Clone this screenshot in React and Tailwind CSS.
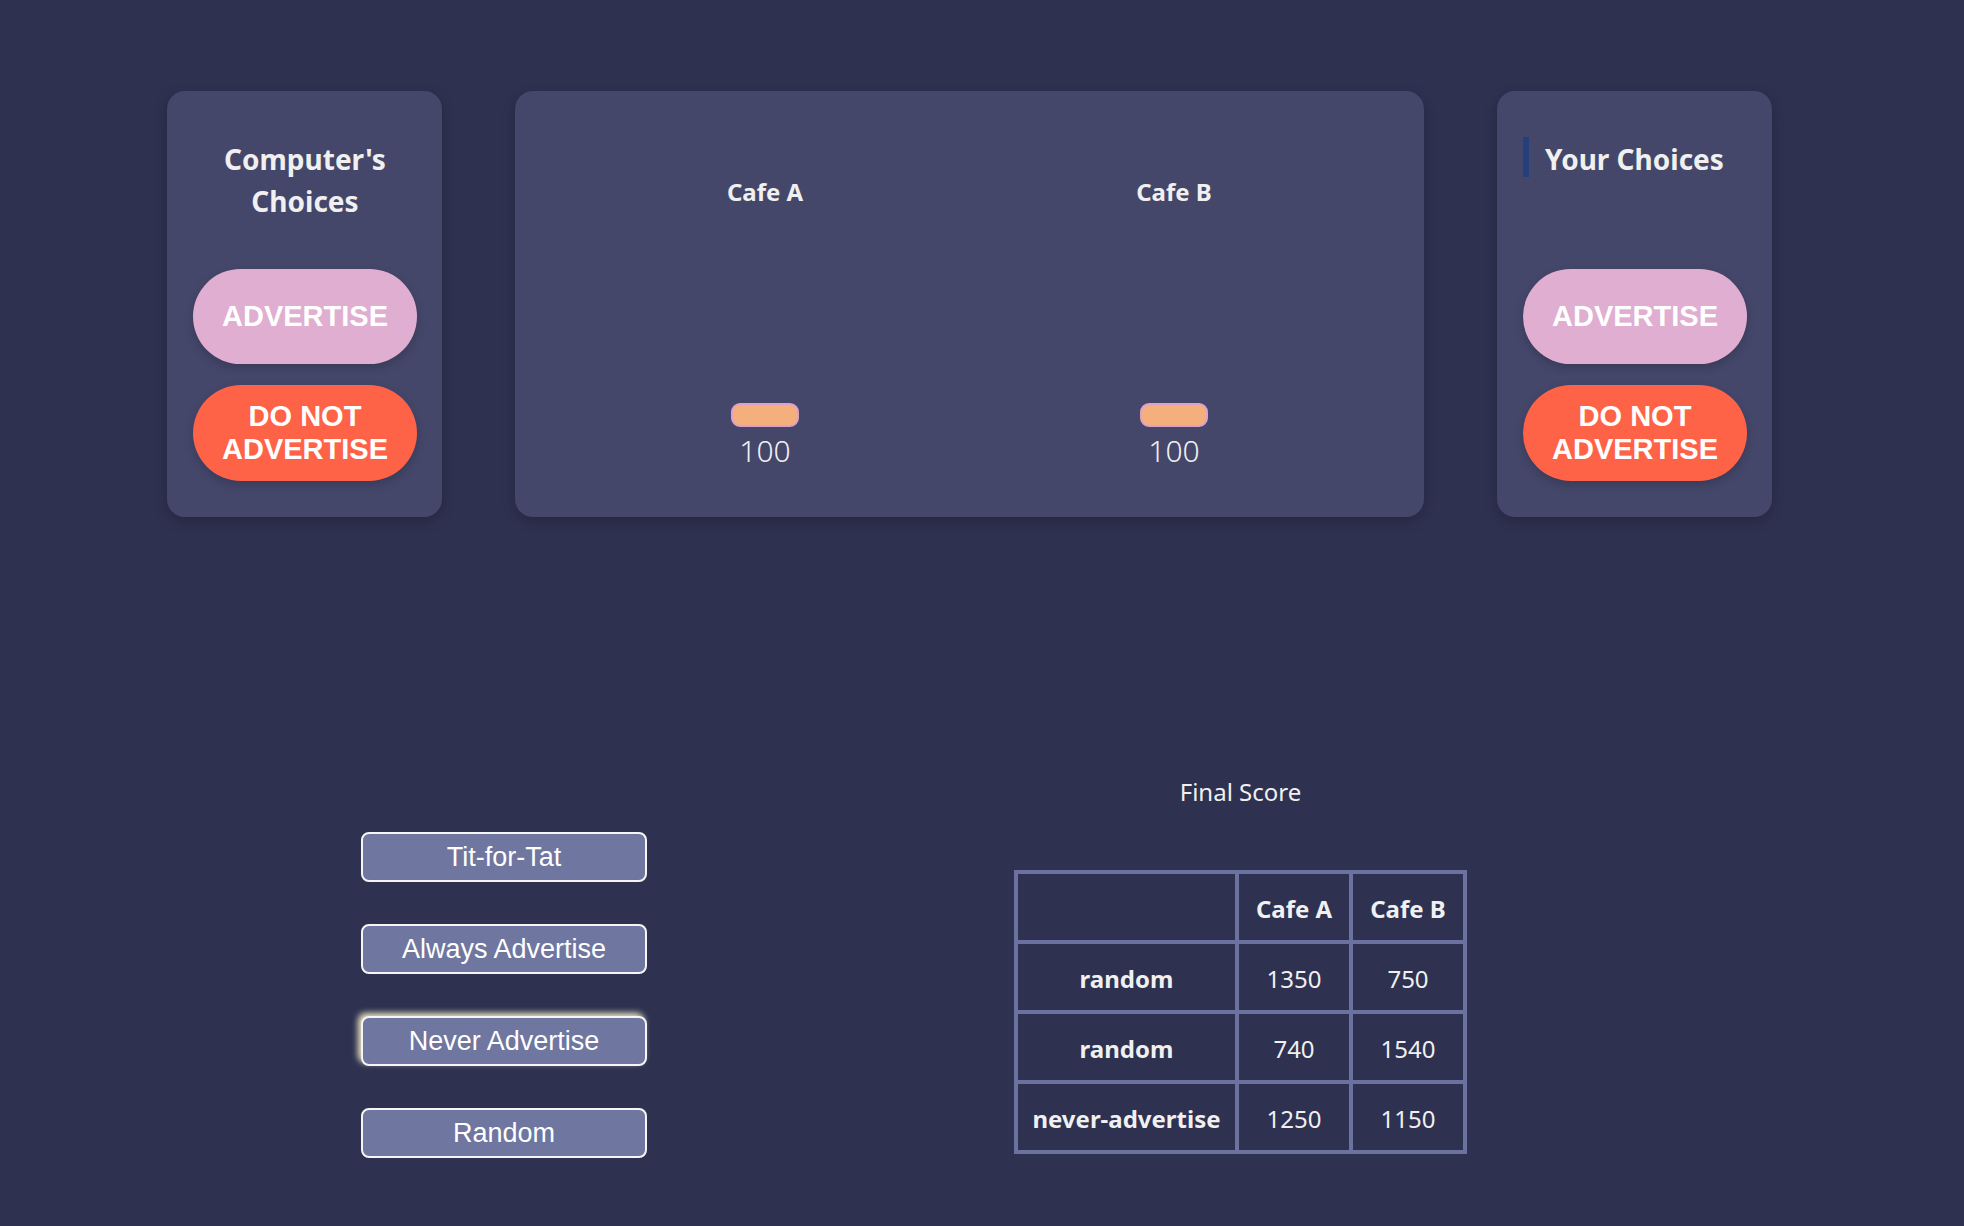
import React from "react";

const sans = "font-['Noto_Sans','Open_Sans',sans-serif]";
const arial = "font-['Liberation_Sans',Arial,sans-serif]";

const ChoiceButtons = () => (
  <div className="flex flex-col gap-[21px]">
    <button
      className={`${arial} h-[95px] w-[224px] rounded-full bg-[#e0aed0] text-[29px] font-bold leading-[33px] text-white shadow-[0_4px_10px_rgba(0,0,0,0.18)]`}
    >
      ADVERTISE
    </button>
    <button
      className={`${arial} h-[96px] w-[224px] rounded-full bg-[#ff6347] text-[29px] font-bold leading-[33px] text-white shadow-[0_4px_10px_rgba(0,0,0,0.18)]`}
    >
      DO NOT
      <br />
      ADVERTISE
    </button>
  </div>
);

const SideCard = ({ children }) => (
  <div className="flex h-[426px] w-[275px] shrink-0 flex-col rounded-[18px] bg-[#44476a] pl-[26px] pt-[46px] shadow-[0_4px_14px_rgba(0,0,0,0.2)]">
    <div className="h-[132px] w-[224px]">{children}</div>
    <ChoiceButtons />
  </div>
);

const CafeColumn = ({ name, score }) => (
  <div className="flex w-[409px] flex-col items-center pt-[86px]">
    <h3 className="text-[24px] font-bold leading-[30px] text-[#f0f0f0]">{name}</h3>
    <div className="mt-[196px] h-[24px] w-[68px] rounded-[9px] border-2 border-[#dda0cc] bg-[#f4b07c]" />
    <div className="mt-[5px] text-[30px] font-light leading-[38px] text-[#f0f0f0]">{score}</div>
  </div>
);

const strategies = ["Tit-for-Tat", "Always Advertise", "Never Advertise", "Random"];

const results = [
  { name: "random", a: 1350, b: 750 },
  { name: "random", a: 740, b: 1540 },
  { name: "never-advertise", a: 1250, b: 1150 },
];

const App = () => {
  return (
    <div className={`${sans} min-h-screen w-full bg-[#2e3150] pl-[167px] pt-[91px] text-[#f0f0f0]`}>
      <div className="flex gap-[73px]">
        <SideCard>
          <h2 className="mt-[1px] text-center text-[28px] font-bold leading-[42px]">
            Computer's
            <br />
            Choices
          </h2>
        </SideCard>

        <div className="flex h-[426px] w-[909px] shrink-0 justify-center rounded-[18px] bg-[#44476a] shadow-[0_4px_14px_rgba(0,0,0,0.2)]">
          <CafeColumn name="Cafe A" score={100} />
          <CafeColumn name="Cafe B" score={100} />
        </div>

        <SideCard>
          <div className="flex items-start">
            <div className="h-[40px] w-[6px] bg-[#243f7c]" />
            <h2 className="ml-[16px] mt-[1px] text-[28px] font-bold leading-[42px]">Your Choices</h2>
          </div>
        </SideCard>
      </div>

      <div className="mt-[260px] flex">
        <div className="ml-[194px] flex flex-col gap-[42px] pt-[55px]">
          {strategies.map((s) => (
            <button
              key={s}
              className={`${arial} h-[50px] w-[286px] rounded-[8px] border-2 border-[#f5f5f5] bg-[#6f76a0] text-[27px] leading-[30px] text-white ${
                s === "Never Advertise" ? "shadow-[-3px_-3px_6px_rgba(255,250,205,0.9)]" : ""
              }`}
            >
              {s}
            </button>
          ))}
        </div>

        <div className="ml-[369px] flex w-[449px] flex-col items-center">
          <div className="text-[24px] leading-[30px]">Final Score</div>
          <table className="mt-[63px] w-[449px] table-fixed border-collapse border-4 border-[#6c729f] text-[24px]">
            <colgroup>
              <col className="w-[221px]" />
              <col className="w-[114px]" />
              <col className="w-[114px]" />
            </colgroup>
            <thead>
              <tr className="h-[70px]">
                <th className="border-4 border-[#6c729f]" />
                <th className="border-4 border-[#6c729f] pt-[3px] font-bold">Cafe A</th>
                <th className="border-4 border-[#6c729f] pt-[3px] font-bold">Cafe B</th>
              </tr>
            </thead>
            <tbody>
              {results.map((r, i) => (
                <tr key={i} className="h-[70px]">
                  <td className="border-4 border-[#6c729f] pt-[3px] text-center font-bold">{r.name}</td>
                  <td className="border-4 border-[#6c729f] pt-[3px] text-center">{r.a}</td>
                  <td className="border-4 border-[#6c729f] pt-[3px] text-center">{r.b}</td>
                </tr>
              ))}
            </tbody>
          </table>
        </div>
      </div>
    </div>
  );
};

export default App;
